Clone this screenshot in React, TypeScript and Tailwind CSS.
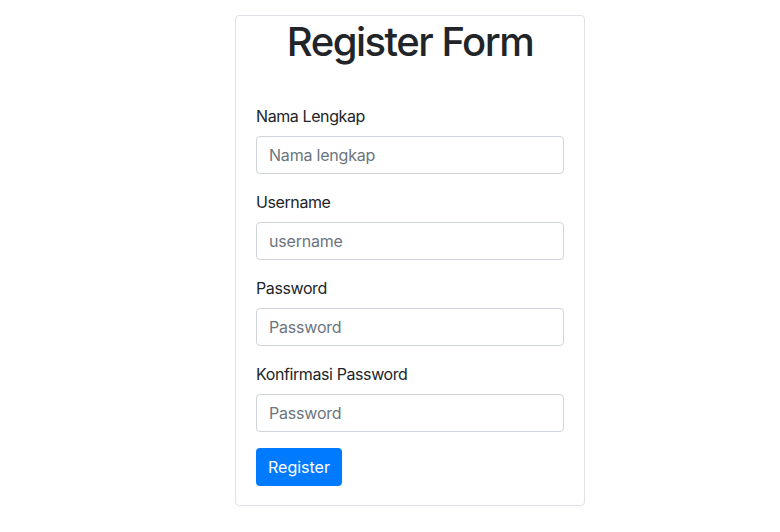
const fields = [
  { label: "Nama Lengkap", placeholder: "Nama lengkap", type: "text" },
  { label: "Username", placeholder: "username", type: "text" },
  { label: "Password", placeholder: "Password", type: "password" },
  { label: "Konfirmasi Password", placeholder: "Password", type: "password" },
];

const App = () => {
  return (
    <div className="min-h-[532px] w-full bg-white pt-[15px] pl-[235px] font-['Inter','Liberation_Sans',sans-serif] text-[#212529]">
      <div className="w-[350px] rounded-[4px] border border-[#dee2e6] bg-white">
        {/* Title */}
        <h1 className="h-[48px] pt-[2px] text-center text-[40px] leading-[48px] font-medium tracking-[-1.5px]">
          Register Form
        </h1>

        {/* Form */}
        <form
          className="flex flex-col px-[20px] pt-[40px] pb-[19px]"
          onSubmit={(e) => e.preventDefault()}
        >
          {fields.map((f) => (
            <div key={f.label} className="mb-[16px] flex flex-col">
              <label className="mb-[8px] text-[16px] leading-[24px] tracking-[-0.4px]">
                {f.label}
              </label>
              <input
                type={f.type}
                placeholder={f.placeholder}
                className="h-[38px] w-full rounded-[4px] border border-[#ced4da] px-[12px] text-[16px] tracking-[-0.2px] text-[#495057] placeholder:text-[#6c757d] outline-none"
              />
            </div>
          ))}
          <div>
            <button
              type="submit"
              className="h-[38px] rounded-[4px] bg-[#007bff] px-[12px] text-[16px] text-white"
            >
              Register
            </button>
          </div>
        </form>
      </div>
    </div>
  );
};

export default App;
